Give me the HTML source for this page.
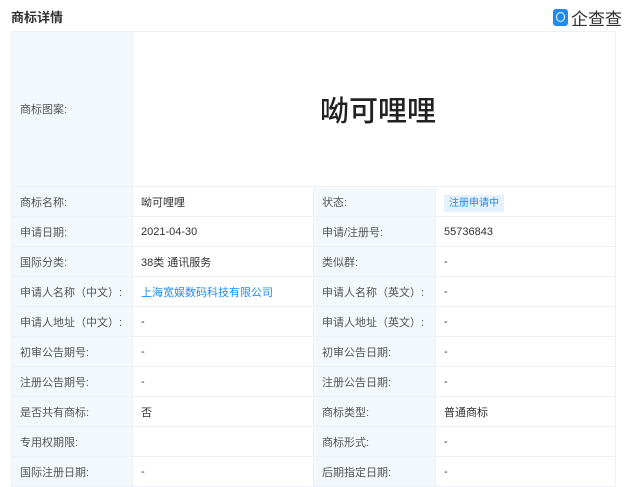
<!DOCTYPE html><html><head><meta charset="utf-8"><style>
body{margin:0;width:629px;height:487px;background:#fff;font-family:"Liberation Sans","Noto Sans CJK SC",sans-serif;overflow:hidden;position:relative}
.t{position:absolute;left:11px;top:7px;font-size:13px;font-weight:bold;color:#333}
.logo{position:absolute;left:553px;top:5px;display:flex;align-items:center;font-size:17px;color:#333}
.logo .i{width:15px;height:17px;background:#1e8cf0;border-radius:3px;margin-right:3px;position:relative}
.logo .i:after{content:"";position:absolute;left:3px;top:3px;width:7px;height:8px;border:1.5px solid #fff;border-radius:50%}
table{position:absolute;left:11px;top:31px;border-collapse:collapse;font-size:11px;color:#333}
td{border:1px solid #eef2f6;height:29px;padding:0 0 0 8px}
td.l{background:#f3f8fc;color:#555}
.big{font-size:29px;text-align:center;color:#222;font-weight:500}
a{color:#1e8cf0;text-decoration:none}
.tag{background:#e5f2fd;color:#1e8cf0;font-size:10px;padding:3px 5px}
</style></head><body>
<div class="t">商标详情</div>
<div class="logo"><div class="i"></div>企查查</div>
<table>
<colgroup><col style="width:121px"><col style="width:181px"><col style="width:122px"><col style="width:180px"></colgroup>
<tr><td class="l" style="height:154px">商标图案:</td><td colspan="3" class="big">呦可哩哩</td></tr>
<tr><td class="l">商标名称:</td><td>呦可哩哩</td><td class="l">状态:</td><td><span class="tag">注册申请中</span></td></tr>
<tr><td class="l">申请日期:</td><td>2021-04-30</td><td class="l">申请/注册号:</td><td>55736843</td></tr>
<tr><td class="l">国际分类:</td><td>38类 通讯服务</td><td class="l">类似群:</td><td>-</td></tr>
<tr><td class="l">申请人名称（中文）:</td><td><a>上海宽娱数码科技有限公司</a></td><td class="l">申请人名称（英文）:</td><td>-</td></tr>
<tr><td class="l">申请人地址（中文）:</td><td>-</td><td class="l">申请人地址（英文）:</td><td>-</td></tr>
<tr><td class="l">初审公告期号:</td><td>-</td><td class="l">初审公告日期:</td><td>-</td></tr>
<tr><td class="l">注册公告期号:</td><td>-</td><td class="l">注册公告日期:</td><td>-</td></tr>
<tr><td class="l">是否共有商标:</td><td>否</td><td class="l">商标类型:</td><td>普通商标</td></tr>
<tr><td class="l">专用权期限:</td><td></td><td class="l">商标形式:</td><td>-</td></tr>
<tr><td class="l">国际注册日期:</td><td>-</td><td class="l">后期指定日期:</td><td>-</td></tr>
</table>
</body></html>
